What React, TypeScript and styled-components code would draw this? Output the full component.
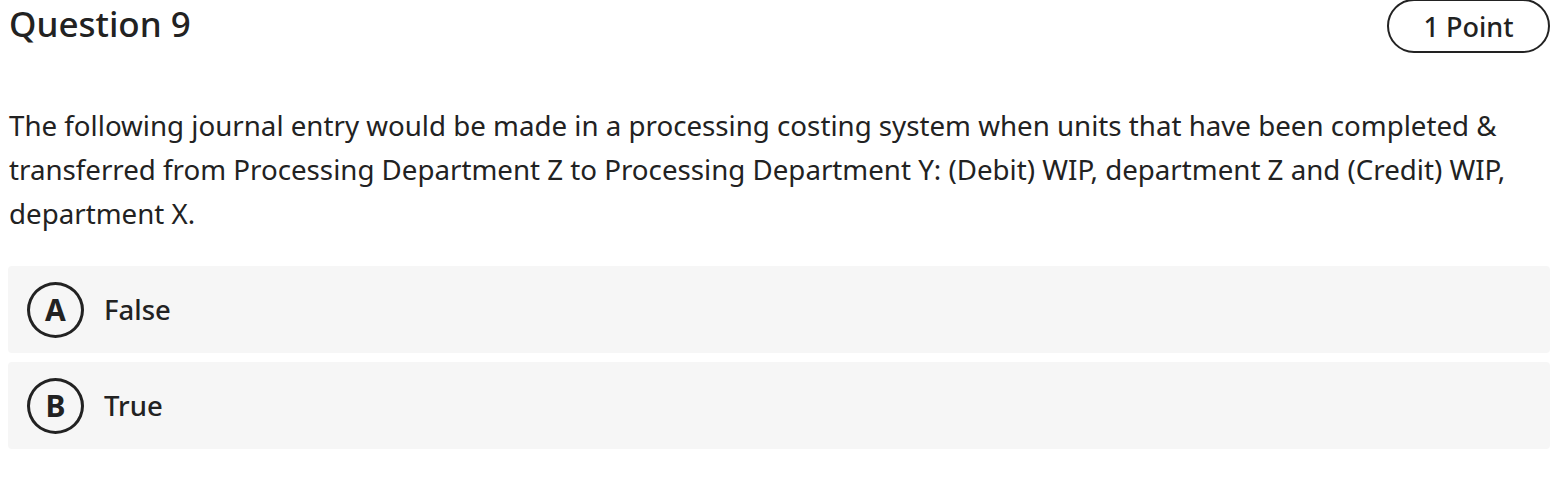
import React from "react";
import styled, { createGlobalStyle } from "styled-components";

const Global = createGlobalStyle`
  html, body { margin: 0; padding: 0; background: #ffffff; }
  body { font-family: "Noto Sans", "Open Sans", sans-serif; color: #222222; }
`;

const Page = styled.div`
  padding: 0 4px 0 8px;
  width: 1554px;
  box-sizing: border-box;
`;

const Header = styled.div`
  display: flex;
  justify-content: space-between;
  align-items: flex-start;
  height: 54px;
`;

const Title = styled.h2`
  margin: 2px 0 0 1px;
  font-size: 35px;
  line-height: 44px;
  font-weight: 500;
  color: #222222;
`;

const Pill = styled.div`
  margin-top: -1px;
  box-sizing: border-box;
  width: 163px;
  height: 54px;
  border: 2px solid #222222;
  border-radius: 27px;
  display: flex;
  align-items: center;
  justify-content: center;
  font-size: 27px;
  font-weight: 500;
`;

const Prompt = styled.p`
  margin: 49px 0 0 1px;
  font-size: 27.7px;
  line-height: 44px;
  font-weight: 400;
  color: #222222;
`;

const Options = styled.div`
  margin-top: 31px;
  display: flex;
  flex-direction: column;
  gap: 9px;
  width: 1542px;
`;

const Option = styled.div`
  display: flex;
  align-items: center;
  height: 87px;
  background: #f6f6f6;
  border-radius: 4px;
  padding-left: 19px;
  gap: 20px;
`;

const Badge = styled.span`
  box-sizing: border-box;
  width: 57px;
  height: 56px;
  border: 3px solid #222222;
  border-radius: 50%;
  display: flex;
  align-items: center;
  justify-content: center;
  font-size: 30px;
  font-weight: 700;
  line-height: 1;
`;

const Label = styled.span`
  font-size: 27.5px;
  font-weight: 500;
`;

const options = [
  { key: "A", text: "False" },
  { key: "B", text: "True" },
];

export default function App() {
  return (
    <Page>
      <Global />
      <Header>
        <Title>Question 9</Title>
        <Pill>1 Point</Pill>
      </Header>
      <Prompt>
        The following journal entry would be made in a processing costing system when units that have been completed &amp;
        transferred from Processing Department Z to Processing Department Y: (Debit) WIP, department Z and (Credit) WIP,
        department X.
      </Prompt>
      <Options>
        {options.map((o) => (
          <Option key={o.key}>
            <Badge>{o.key}</Badge>
            <Label>{o.text}</Label>
          </Option>
        ))}
      </Options>
    </Page>
  );
}
